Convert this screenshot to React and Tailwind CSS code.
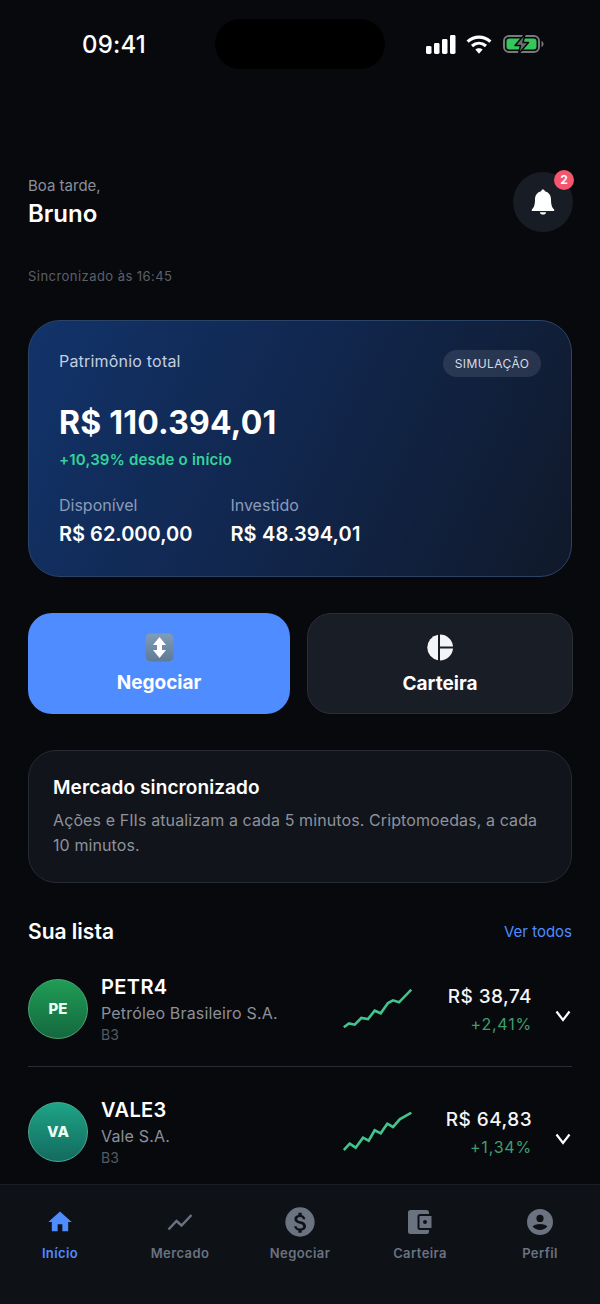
const stocks = [
  {
    ticker: 'PETR4',
    name: 'Petróleo Brasileiro S.A.',
    initials: 'PE',
    price: 'R$ 38,74',
    change: '+2,41%',
    avatar: 'bg-gradient-to-b from-[#1f9d55] to-[#14683f] border-[#4aa574]',
    points: '0.8,38.3 6,34.5 11.7,35.7 18.3,29 25,30 31.7,21.7 37.7,24.3 45,14 50,11.3 56,13.3 68.3,0.7',
  },
  {
    ticker: 'VALE3',
    name: 'Vale S.A.',
    initials: 'VA',
    price: 'R$ 64,83',
    change: '+1,34%',
    avatar: 'bg-gradient-to-b from-[#1ea486] to-[#136b5f] border-[#4aa892]',
    points: '0.8,38 6.7,31.7 12.7,35.7 20,25.7 25.7,28.7 31.7,18.3 37.7,21.3 44.3,11.7 50,15 56.7,7.3 68.3,0.7',
  },
];

const tabs = [
  { label: 'Início', icon: HomeIcon, active: true },
  { label: 'Mercado', icon: ChartIcon },
  { label: 'Negociar', icon: DollarIcon },
  { label: 'Carteira', icon: WalletIcon },
  { label: 'Perfil', icon: ProfileIcon },
];

function StatusIcons() {
  return (
    <div className="flex items-center">
      <svg width="30" height="19" viewBox="0 0 30 19" fill="white">
        <rect x="0" y="11" width="5.5" height="8" rx="1.4" />
        <rect x="8" y="8" width="5.5" height="11" rx="1.4" />
        <rect x="16" y="4" width="5.5" height="15" rx="1.4" />
        <rect x="24" y="0" width="5.5" height="19" rx="1.4" />
      </svg>
      <svg className="ml-[10px]" width="26" height="19" viewBox="0 0 26 19" fill="none" stroke="white" strokeWidth="3.2">
        <path d="M1.6 6.6C8.4 .6 17.6 .6 24.4 6.6" />
        <path d="M6 11C10.200 7.300 15.800 7.300 20 11" />
        <path d="M13 18.800 9.300 14.600C11.400 12.800 14.600 12.800 16.700 14.600Z" fill="white" stroke="none" />
      </svg>
      <svg className="ml-[11px]" width="41" height="20" viewBox="0 0 41 20" fill="none">
        <rect x="1" y="2" width="35" height="16" rx="5" stroke="#77797c" strokeWidth="2" />
        <rect x="3.500" y="4.500" width="30" height="11" rx="3" fill="#34c759" />
        <path d="M38.500 7v6c1.400-.5 2-1.600 2-3s-.6-2.500-2-3Z" fill="#77797c" />
        <path d="M22 0 12 11.500h5.500L15.500 20l10-11.500H20Z" fill="#6b6e70" stroke="#08090d" strokeWidth="1.500" strokeLinejoin="round" />
      </svg>
    </div>
  );
}

function BellIcon() {
  return (
    <svg width="24" height="26" viewBox="0 0 24 26" fill="white">
      <path d="M12 0.500c-1 0-1.700.7-1.800 1.700C6.200 3.100 4 6.400 4 10.500c0 5.500-1 8-3.100 10-.6.700-.2 1.500.7 1.500h20.800c.9 0 1.300-.8.700-1.500-2.100-2-3.100-4.500-3.100-10 0-4.100-2.200-7.400-6.200-8.300-.1-1-.8-1.700-1.800-1.700Z" />
      <path d="M8.800 23.200c.3 1.400 1.600 2.300 3.200 2.300s2.900-.9 3.200-2.300Z" />
    </svg>
  );
}

function SwapEmoji() {
  return (
    <svg width="29" height="29" viewBox="0 0 29 29">
      <defs>
        <linearGradient id="swapBg" x1="0" y1="0" x2="0" y2="1">
          <stop offset="0" stopColor="#7f9cb8" />
          <stop offset="1" stopColor="#5d7a96" />
        </linearGradient>
      </defs>
      <rect x="0.500" y="0.500" width="28" height="28" rx="5" fill="url(#swapBg)" />
      <path d="M14.500 4 21 12h-4v5h4l-6.500 8L8 17h4v-5H8Z" fill="white" />
    </svg>
  );
}

function PieIcon() {
  return (
    <svg width="26" height="27" viewBox="0 0 26 27" fill="#f3f5f8">
      <path d="M11 .7A13 13 0 0 0 11 26.300Z" />
      <path d="M13 .5A13 13 0 0 1 26 12.500H13Z" />
      <path d="M13 14.500H26A13 13 0 0 1 13 26.500Z" />
    </svg>
  );
}

function HomeIcon() {
  return (
    <svg width="28" height="28" viewBox="0 0 24 24" fill="currentColor">
      <path d="M10 20v-6h4v6h5v-8h3L12 3 2 12h3v8z" />
    </svg>
  );
}

function ChartIcon() {
  return (
    <svg width="28" height="28" viewBox="0 0 28 28" fill="none" stroke="currentColor" strokeWidth="2.400">
      <path d="M2.500 21.500 10.500 13l5 4.500L25.500 7" />
    </svg>
  );
}

function DollarIcon() {
  return (
    <svg width="32" height="32" viewBox="0 0 24 24" fill="currentColor">
      <path d="M12 1a11 11 0 1 0 0 22 11 11 0 0 0 0-22Zm1.300 17.300V20h-2.500v-1.700c-1.600-.3-3-1.300-3.200-3.100h1.900c.1 1 .8 1.700 2.600 1.700 1.900 0 2.300-.9 2.300-1.500 0-.8-.4-1.500-2.600-2-2.400-.6-4-1.600-4-3.600 0-1.700 1.300-2.800 3-3.100V5h2.500v1.700c1.800.4 2.600 1.800 2.700 3.200h-1.900c-.1-1-.6-1.700-2-1.700-1.400 0-2.200.6-2.200 1.500 0 .8.600 1.300 2.600 1.800 2 .5 4 1.400 4 3.800 0 1.800-1.300 2.700-3.200 3Z" />
    </svg>
  );
}

function WalletIcon() {
  return (
    <svg width="26" height="26" viewBox="0 0 26 26" fill="currentColor">
      <path fillRule="evenodd" d="M3.500 1h16A2.500 2.500 0 0 1 22 3.500V5H13a2.500 2.500 0 0 0-2.500 2.500v11A2.500 2.500 0 0 0 13 21h9v1.500a2.500 2.500 0 0 1-2.500 2.500h-16A2.500 2.500 0 0 1 1 22.500v-19A2.500 2.500 0 0 1 3.500 1Z" />
      <path fillRule="evenodd" d="M13 7h11.500v12H13a.5.5 0 0 1-.5-.5v-11A.5.5 0 0 1 13 7Zm5 8a2 2 0 1 0 0-4 2 2 0 0 0 0 4Z" />
    </svg>
  );
}

function ProfileIcon() {
  return (
    <svg width="26" height="26" viewBox="0 0 26 26" fill="currentColor">
      <path fillRule="evenodd" d="M13 0a13 13 0 1 0 0 26 13 13 0 0 0 0-26Zm0 5.800a3.600 3.600 0 1 1 0 7.200 3.600 3.600 0 0 1 0-7.200Zm0 9.200c3.400 0 6.200 1 7.400 2.600a9.800 9.800 0 0 1-14.800 0C6.800 16 9.600 15 13 15Z" />
    </svg>
  );
}

function StockRow({ stock, first }) {
  return (
    <div className={first ? 'border-b border-[#2a2d33] pb-[27px]' : 'pt-[35px]'}>
      <div className="flex h-[60px] items-center">
        <div className={`flex h-[60px] w-[60px] shrink-0 items-center justify-center rounded-full border text-[15px] font-extrabold text-[#eafff4] ${stock.avatar}`}>
          {stock.initials}
        </div>
        <div className="ml-[13px] mt-[1px] w-[242px] shrink-0">
          <div className="text-[20px] font-semibold leading-[26px] tracking-[0.4px] text-white">{stock.ticker}</div>
          <div className="mt-[2px] text-[16px] leading-[22px] tracking-[0.17px] text-[#8b9099]">{stock.name}</div>
          <div className="mt-[1px] text-[14px] leading-[20px] text-[#555a64]">B3</div>
        </div>
        <svg className="shrink-0" width="70" height="40" viewBox="0 0 70 40" fill="none" stroke="#41c48e" strokeWidth="2.600">
          <polyline points={stock.points} />
        </svg>
        <div className="mt-[2px] w-[119px] shrink-0 text-right">
          <div className="text-[19px] font-medium leading-[26px] tracking-[0.45px] text-[#f4f5f7]">{stock.price}</div>
          <div className="mt-[2px] text-[16px] leading-[24px] tracking-[0.8px] text-[#3d9f6e]">{stock.change}</div>
        </div>
        <svg className="ml-[23px] mt-[14px] shrink-0" width="16" height="12" viewBox="0 0 16 12" fill="none" stroke="white" strokeWidth="2.200">
          <path d="M1.500 1.500 8 10l6.500-8.500" />
        </svg>
      </div>
    </div>
  );
}

export default function App() {
  return (
    <div className="relative h-[1304px] w-[600px] overflow-hidden bg-[#08090d] font-['Inter',sans-serif] text-white">
      <div className="flex pt-[19px]">
        <div className="flex h-[50px] w-[215px] items-center pl-[13px] pt-[2px]">
          <span className="w-full text-center text-[24px] font-medium tracking-[0.2px]">09:41</span>
        </div>
        <div className="h-[50px] w-[170px] rounded-[25px] bg-black" />
        <div className="flex h-[50px] flex-1 items-center justify-end pr-[56px]">
          <StatusIcons />
        </div>
      </div>

      <div className="px-[28px]">
        <div className="mt-[103px] flex h-[60px] items-start justify-between">
          <div className="pt-[4px]">
            <div className="text-[15px] leading-[20px] text-[#8a8f98]">Boa tarde,</div>
            <div className="mt-[2px] text-[24px] font-semibold leading-[32px]">Bruno</div>
          </div>
          <div className="relative -mr-px flex h-[60px] w-[60px] items-center justify-center rounded-full bg-[#181c24]">
            <BellIcon />
            <span className="absolute -right-px -top-[2px] flex h-[20px] w-[20px] items-center justify-center rounded-full bg-[#f4566f] text-[12px] font-bold">2</span>
          </div>
        </div>

        <div className="mt-[34px] text-[13px] leading-[20px] tracking-[0.45px] text-[#5b606a]">Sincronizado às 16:45</div>

        <div className="mt-[34px] h-[257px] rounded-[32px] border border-[#2a4468] bg-[linear-gradient(115deg,#12336a,#11264c_50%,#10192a)] px-[30px] pt-[29px]">
          <div className="flex items-start justify-between">
            <span className="pt-px text-[16px] leading-[20px] tracking-[0.2px] text-[#c3cfe2]">Patrimônio total</span>
            <span className="flex h-[27px] w-[98px] items-center justify-center rounded-full bg-[#ffffff1a] text-[12px] tracking-[0.4px] text-[#d7dce6]">SIMULAÇÃO</span>
          </div>
          <div className="mt-[26px] text-[32px] font-bold leading-[40px] tracking-[0.2px]">R$ 110.394,01</div>
          <div className="mt-[7px] text-[15px] font-semibold leading-[20px] tracking-[0.2px] text-[#34d399]">+10,39% desde o início</div>
          <div className="mt-[25px] flex gap-[38px]">
            <div>
              <div className="text-[16px] leading-[20px] text-[#8b9bb8]">Disponível</div>
              <div className="mt-[5px] text-[20px] font-semibold leading-[28px]">R$ 62.000,00</div>
            </div>
            <div>
              <div className="text-[16px] leading-[20px] text-[#8b9bb8]">Investido</div>
              <div className="mt-[5px] text-[20px] font-semibold leading-[28px] tracking-[0.15px]">R$ 48.394,01</div>
            </div>
          </div>
        </div>

        <div className="mt-[36px] flex gap-[17px]">
          <button className="flex h-[101px] w-[262px] shrink-0 flex-col items-center rounded-[24px] bg-[#4f8cff] pt-[20px]">
            <SwapEmoji />
            <span className="mt-[8px] text-[19px] font-bold leading-[26px]">Negociar</span>
          </button>
          <button className="flex h-[101px] w-[266px] shrink-0 flex-col items-center rounded-[24px] border border-[#2a2f38] bg-[#191d25] pt-[20px]">
            <PieIcon />
            <span className="mt-[10px] text-[19px] font-bold leading-[26px]">Carteira</span>
          </button>
        </div>

        <div className="mt-[36px] h-[133px] rounded-[28px] border border-[#262b33] bg-[#11141a] px-[24px] pt-[24px]">
          <div className="text-[19px] font-semibold leading-[26px] tracking-[0.1px]">Mercado sincronizado</div>
          <p className="mt-[7px] text-[16px] leading-[25px] tracking-[0.1px] text-[#8d929c]">
            Ações e FIIs atualizam a cada 5 minutos. Criptomoedas, a cada 10 minutos.
          </p>
        </div>

        <div className="mt-[35px] flex items-center justify-between">
          <span className="text-[21px] font-semibold leading-[28px]">Sua lista</span>
          <span className="text-[15px] leading-[28px] text-[#4f8cff]">Ver todos</span>
        </div>

        <div className="mt-[33px]">
          {stocks.map((stock, i) => (
            <StockRow key={stock.ticker} stock={stock} first={i === 0} />
          ))}
        </div>
      </div>

      <nav className="absolute inset-x-0 bottom-0 grid h-[120px] grid-cols-5 border-t border-[#1a1d24] bg-[#0e1116]">
        {tabs.map(({ label, icon: Icon, active }) => (
          <div key={label} className={`flex flex-col items-center ${active ? 'text-[#4f8cff]' : 'text-[#6b7280]'}`}>
            <div className="mt-[21px] flex h-[32px] items-center justify-center">
              <Icon />
            </div>
            <span className="mt-[5px] text-[13px] font-semibold leading-[20px] tracking-[0.4px]">{label}</span>
          </div>
        ))}
      </nav>
    </div>
  );
}
